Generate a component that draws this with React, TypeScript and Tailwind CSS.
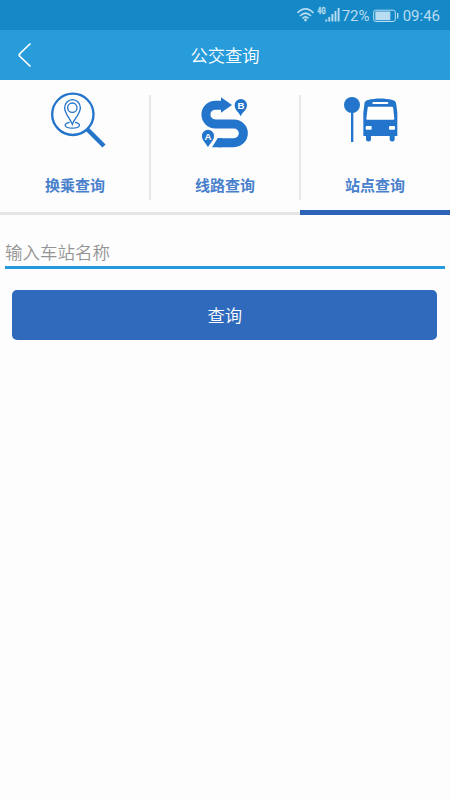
import React from "react";

const TransferIcon = () => (
  <svg className="h-[70px] w-[90px]" viewBox="0 0 270 210" fill="none" stroke="#2374cb">
    <circle cx="128.500" cy="88" r="62" strokeWidth="7" />
    <path d="M171 132L222 183" strokeWidth="13" />
    <path d="M127 118C120 100 104 86 104 68a23.500 24 0 0 1 47 0C151 86 134 100 127 118z" strokeWidth="4" />
    <circle cx="127" cy="68" r="14" strokeWidth="4" />
    <path d="M119 112C99 115 101 129.500 127 129.500S155 115 135 112" strokeWidth="4" />
  </svg>
);

const RouteIcon = () => (
  <svg className="h-[70px] w-[80px]" viewBox="0 0 240 210" fill="#2374cb">
    <path
      d="M112 60.500H91a28 28 0 0 0 0 56.500H147a28 28 0 0 1 0 56H98"
      fill="none"
      stroke="#2374cb"
      strokeWidth="27"
    />
    <path d="M108 37L141 60L108 83z" />
    <path d="M81 186.500L98 159.500H112V186.500z" />
    <path d="M167 94C161 81 149 75 149 61a18.500 19 0 0 1 37 0C186 75 173 81 167 94z" />
    <path d="M69 187C63 174 51 167 51 153a18 19 0 0 1 36 0C87 167 75 174 69 187z" />
    <g fill="#fff" fontFamily="Liberation Sans, sans-serif" fontWeight="700" fontSize="29" textAnchor="middle">
      <text x="168" y="73">B</text>
      <text x="69" y="165">A</text>
    </g>
  </svg>
);

const StationIcon = () => (
  <svg className="h-[70px] w-[80px]" viewBox="0 0 240 210" fill="#2374cb">
    <circle cx="51" cy="60" r="24" />
    <path d="M48 80H55V171H48z" />
    <path d="M88 59C88 50 92 47 99 45C122 39 150 39 172 45C180 47 183 50 184 59L187 83V153H85V83z" />
    <path d="M93 150H108V162a7.500 7.500 0 0 1-15 0zM164 150H179V162a7.500 7.500 0 0 1-15 0z" />
    <g fill="#fff">
      <rect x="112" y="51" width="48" height="6" rx="3" />
      <path d="M101 65H171Q174 65 174.500 68L178 101Q178 104 175 104H97Q94 104 94 101L98 68Q98 65 101 65z" />
      <rect x="92" y="123" width="18" height="11" rx="3" />
      <rect x="162" y="123" width="18" height="11" rx="3" />
    </g>
  </svg>
);

const tabs = [
  { label: "换乘查询", icon: <TransferIcon />, active: false },
  { label: "线路查询", icon: <RouteIcon />, active: false },
  { label: "站点查询", icon: <StationIcon />, active: true },
];

const StatusBar = () => (
  <div className="flex h-[30px] items-center justify-end bg-[#1589c7] pr-[10px] font-[Roboto,sans-serif] text-[15px] leading-[30px] text-[#b9dcf0]">
    <svg className="h-[30px] w-[45px]" viewBox="0 0 45 30" fill="none" stroke="currentColor">
      <path d="M.5 13Q8.500 5 16.500 13M3 16Q8.500 10.500 14 16M5.500 18.500Q8.500 15.500 11.500 18.500" strokeWidth="1.700" />
      <circle cx="8.500" cy="20" r="1.400" fill="currentColor" stroke="none" />
      <path d="M29.300 21.500V19.500M32.300 21.500V17M35.400 21.500V14M38.500 21.500V11M41.600 21.500V8" strokeWidth="1.900" />
      <text
        transform="translate(20.500 14) scale(.75 1)"
        fill="currentColor"
        stroke="currentColor"
        strokeWidth=".3"
        fontSize="8.500"
        fontWeight="700"
      >
        4G
      </text>
    </svg>
    <span className="w-[31px] pt-[2px]">72%</span>
    <svg className="h-[30px] w-[30px]" viewBox="0 0 30 30" fill="none" stroke="currentColor">
      <rect x=".7" y="10.200" width="21.600" height="11.300" rx="2" strokeWidth="1" />
      <rect x="2.300" y="11.500" width="15" height="8.700" fill="currentColor" stroke="none" />
      <path d="M24.700 13V18.500" strokeWidth="1.300" />
    </svg>
    <span className="pt-[2px]">09:46</span>
  </div>
);

const Header = () => (
  <header className="grid h-[50px] grid-cols-[50px_1fr_50px] items-center bg-[#289cdb] text-white">
    <svg className="h-[50px] w-[50px]" viewBox="0 0 50 50" fill="none" stroke="currentColor">
      <path d="M30.500 13.500L20 23.500Q18.500 25 20 26.500L30.500 36.500" strokeWidth="1.700" />
    </svg>
    <h1 className="text-center text-[17.300px] font-[350]">公交查询</h1>
  </header>
);

export default function App() {
  return (
    <div className="min-h-screen bg-[#fdfdfd] font-['Noto_Sans_CJK_SC',sans-serif]">
      <StatusBar />
      <Header />

      <nav className="grid h-[135px] grid-cols-3">
        {tabs.map((tab, i) => (
          <button
            key={tab.label}
            className={`relative flex flex-col items-center pt-[5px] ${
              tab.active ? "border-b-[5px] border-[#2c63b6]" : "border-b-[3px] border-[#e5e5e5]"
            }`}
          >
            {tab.icon}
            <span className="mt-[19px] text-[15px] leading-[22px] font-bold text-[#4880cc]">{tab.label}</span>
            {i < 2 && <i className="absolute top-[15px] -right-px h-[105px] w-[2px] bg-[#e8e8e8]" />}
          </button>
        ))}
      </nav>

      <form className="flex flex-col">
        <input
          className="mx-[5px] mt-[22px] h-[32px] border-b-[3px] border-[#259bdc] text-[17.500px] font-[350] text-gray-700 outline-none placeholder:text-[#949494]"
          placeholder="输入车站名称"
        />
        <button
          type="button"
          className="mr-[12.600px] ml-[12.300px] mt-[21px] h-[50px] rounded-[5px] bg-[#2f6abc] text-[17.300px] font-[350] text-white"
        >
          查询
        </button>
      </form>
    </div>
  );
}
